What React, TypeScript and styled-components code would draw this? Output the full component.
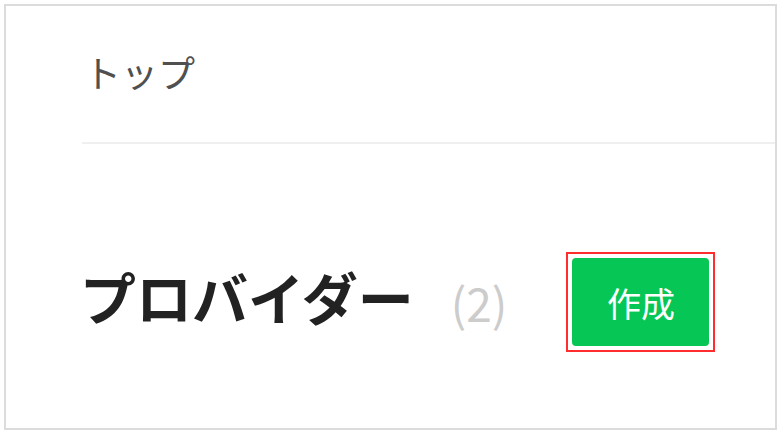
import React from "react";
import styled, { createGlobalStyle } from "styled-components";

const Global = createGlobalStyle`
  html, body { margin: 0; padding: 0; background: #ffffff; }
  body { font-family: "Noto Sans CJK JP", "Noto Sans", sans-serif; }
`;

const Frame = styled.div`
  box-sizing: border-box;
  margin: 4px;
  width: 773px;
  height: 426px;
  border: 2px solid #dcdcdc;
  background: #ffffff;
  display: flex;
  flex-direction: column;
`;

const Breadcrumb = styled.div`
  box-sizing: border-box;
  margin-left: 76px;
  height: 138px;
  border-bottom: 2px solid #efefef;
  display: flex;
  align-items: center;
  padding-left: 2px;
  padding-bottom: 4px;
  font-size: 37px;
  font-weight: 400;
  color: #505050;
`;

const TitleRow = styled.div`
  display: flex;
  align-items: center;
  padding-left: 74px;
  padding-top: 108px;
`;

const Title = styled.h1`
  margin: 0 0 12px 0;
  font-size: 56px;
  font-weight: 700;
  color: #222222;
  line-height: 1;
  letter-spacing: 0;
`;

const Count = styled.span`
  margin-left: 37px;
  font-size: 46px;
  font-weight: 400;
  color: #cccccc;
  line-height: 1;
`;

const Highlight = styled.div`
  margin-left: 59px;
  border: 2px solid #ff2d2d;
  padding: 4px;
  display: flex;
`;

const CreateButton = styled.button`
  box-sizing: border-box;
  width: 137px;
  height: 88px;
  border: none;
  border-radius: 4px;
  background: #06c755;
  color: #ffffff;
  font-family: "Noto Sans CJK JP", "Noto Sans", sans-serif;
  font-size: 34px;
  font-weight: 400;
  padding: 0;
  cursor: pointer;
`;

export default function App() {
  return (
    <>
      <Global />
      <Frame>
        <Breadcrumb>トップ</Breadcrumb>
        <TitleRow>
          <Title>プロバイダー</Title>
          <Count>(2)</Count>
          <Highlight>
            <CreateButton>作成</CreateButton>
          </Highlight>
        </TitleRow>
      </Frame>
    </>
  );
}
